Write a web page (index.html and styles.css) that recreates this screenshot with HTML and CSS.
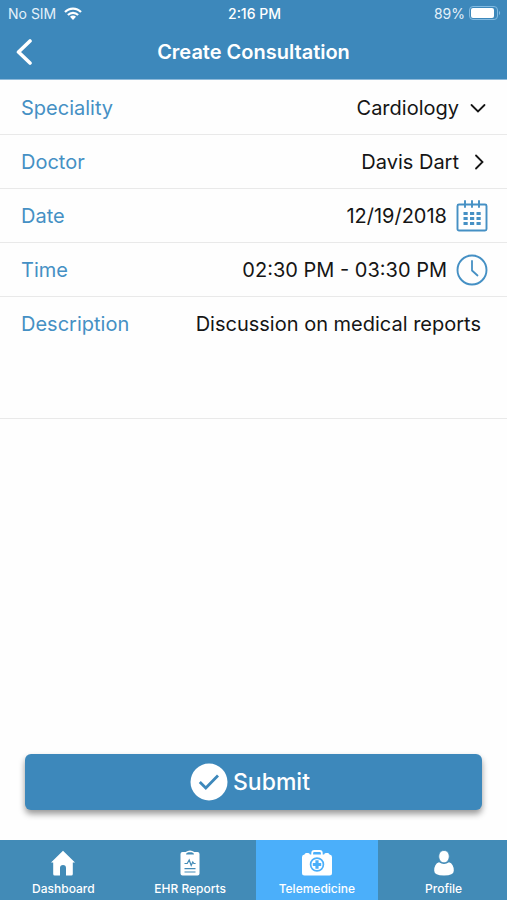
FILE: index.html
```html
<!DOCTYPE html>
<html lang="en">
<head>
  <meta charset="utf-8">
  <meta name="viewport" content="width=device-width, initial-scale=1">
  <title>Create Consultation</title>
  <link rel="stylesheet" href="styles.css">
</head>
<body>
  <header class="top">
    <div class="status">
      <div class="status-left">
        <span>No SIM</span>
        <svg class="wifi" viewBox="0 0 18 13" aria-hidden="true">
          <path d="M1 5a11 11 0 0 1 16 0M3.900 8a7 7 0 0 1 10.200 0" fill="none" stroke="currentColor" stroke-width="2.200"/>
          <path d="M9 13 6 9.800a4.200 4.200 0 0 1 6 0z" fill="currentColor"/>
        </svg>
      </div>
      <span class="clock">2:16 PM</span>
      <div class="status-right">
        <span>89%</span>
        <svg class="battery" viewBox="0 0 32 14" aria-hidden="true">
          <rect x="0.500" y="0.500" width="28" height="13" rx="3.500" fill="none" stroke="#82bbe2"/>
          <rect x="2" y="2" width="23" height="10" rx="2" fill="#fff"/>
          <path d="M30 5v4c1.500-.5 1.500-3.500 0-4z" fill="#82bbe2"/>
        </svg>
      </div>
    </div>
    <div class="title-bar">
      <button class="back" type="button" aria-label="Back">
        <svg viewBox="0 0 18 26" aria-hidden="true"><path d="M15 2 3.500 13 15 24" fill="none" stroke="currentColor" stroke-width="3.600" stroke-linecap="round" stroke-linejoin="round"/></svg>
      </button>
      <h1>Create Consultation</h1>
    </div>
  </header>

  <main>
    <form class="form">
      <div class="fields">
        <div class="row">
          <label for="speciality">Speciality</label>
          <select class="value" id="speciality"><option>Cardiology</option></select>
          <svg class="chevron" viewBox="0 0 18 18" aria-hidden="true"><path d="M2.500 6 9 12.500 15.500 6" fill="none" stroke="currentColor" stroke-width="1.800" stroke-linecap="round"/></svg>
        </div>
        <div class="row">
          <label for="doctor">Doctor</label>
          <button class="value" id="doctor" type="button">Davis Dart</button>
          <svg class="chevron" viewBox="0 0 18 18" aria-hidden="true"><path d="M7 2.500 13.500 9 7 15.500" fill="none" stroke="currentColor" stroke-width="1.800" stroke-linecap="round"/></svg>
        </div>
        <div class="row row-icon">
          <label for="date">Date</label>
          <input class="value" id="date" type="text" value="12/19/2018">
          <svg class="field-icon" viewBox="0 0 32 32" aria-hidden="true">
            <rect x="1.500" y="4.500" width="29" height="26" rx="1.500" fill="none" stroke="currentColor" stroke-width="1.900"/>
            <path d="M9 1v6M16 1v6M23 1v6" stroke="currentColor" stroke-width="1.900" stroke-linecap="round"/>
            <path d="M7.500 13.400h4.200m2.300 0h4.200m2.300 0h4.200M7.500 18.400h4.200m2.300 0h4.200m2.300 0h4.200M7.500 23.400h4.200m2.300 0h4.200m2.300 0h4.200" stroke="currentColor" stroke-width="3"/>
          </svg>
        </div>
        <div class="row row-icon">
          <label for="time">Time</label>
          <input class="value" id="time" type="text" value="02:30 PM - 03:30 PM">
          <svg class="field-icon" viewBox="0 0 32 32" aria-hidden="true">
            <circle cx="16" cy="16" r="14.500" fill="none" stroke="currentColor" stroke-width="1.900"/>
            <path d="M16 7v9.500l5.500 5" fill="none" stroke="currentColor" stroke-width="1.800" stroke-linecap="round" stroke-linejoin="round"/>
          </svg>
        </div>
        <div class="row row-tall">
          <label for="description">Description</label>
          <textarea class="value" id="description" rows="3">Discussion on medical reports</textarea>
        </div>
      </div>

      <button class="submit" type="submit">
        <svg viewBox="0 0 38 38" aria-hidden="true">
          <circle cx="19" cy="19" r="18.500" fill="#fff"/>
          <path d="m9.800 19 6 6L28 12.500" fill="none" stroke="#3d88bb" stroke-width="2.800"/>
        </svg>
        <span>Submit</span>
      </button>
    </form>
  </main>

  <nav class="tabs">
    <a class="tab" href="#dashboard">
      <svg viewBox="0 0 30 26" aria-hidden="true"><path d="M15 .8 3 12.500h2.200V24q0 1.500 1.500 1.500H12V18a3 3 0 0 1 6 0v7.500h5.300q1.500 0 1.500-1.500V12.500H27z" fill="currentColor"/></svg>
      <span>Dashboard</span>
    </a>
    <a class="tab" href="#reports">
      <svg viewBox="0 0 30 26" aria-hidden="true">
        <path d="M7.500 2h3.200Q12.500.5 15 .5T19.300 2h3.200Q24.500 2 24.500 4v19.500q0 2-2 2h-15q-2 0-2-2V4q0-2 2-2z" fill="currentColor"/>
        <path d="M11 4.500h8q0-2-2.500-2.300h-3Q11 2.500 11 4.500z" fill="#428bb7"/>
        <path d="M9.500 13.500h2.700l2-3.500 2 5.500 1.600-3.500 1 1.500h1.800M9.500 18.700h11M9.500 22h11" fill="none" stroke="#428bb7" stroke-width="1.200"/>
      </svg>
      <span>EHR Reports</span>
    </a>
    <a class="tab tab-active" href="#telemedicine" aria-current="page">
      <svg viewBox="0 0 30 26" aria-hidden="true">
        <path d="M10.200 5V3q0-2 2-2h5.600q2 0 2 2v2" fill="none" stroke="currentColor" stroke-width="1.800"/>
        <path d="M2.500 4.500q.3-1.500 1.700-1.500h2q1.500 0 1.700 1.500h14.200q.2-1.500 1.700-1.500h2q1.400 0 1.700 1.500Q30 4.800 30 7v16q0 2.500-2.500 2.500h-25Q0 25.500 0 23V7Q0 4.800 2.500 4.500z" fill="currentColor"/>
        <circle cx="15" cy="14.500" r="6.400" fill="none" stroke="#4baffa" stroke-width="1.700"/>
        <path d="M13.400 10.300h3.200v2.600h2.600v3.200h-2.600v2.600h-3.200v-2.600h-2.600v-3.200h2.600z" fill="#4baffa"/>
      </svg>
      <span>Telemedicine</span>
    </a>
    <a class="tab" href="#profile">
      <svg viewBox="0 0 30 26" aria-hidden="true">
        <path d="M10 12.200q5 3.500 10 0 4.800 1.500 4.800 8.500 0 4.800-9.800 4.800t-9.800-4.800q0-7 4.800-8.500z" fill="currentColor"/>
        <path d="M15 .5c3.300 0 5.200 2.300 5.200 6s-2.200 6.300-5.200 6.300-5.200-2.600-5.200-6.300S11.700.5 15 .5z" fill="currentColor" stroke="#428bb7" stroke-width="0.800"/>
      </svg>
      <span>Profile</span>
    </a>
  </nav>
</body>
</html>
```

FILE: styles.css
```css
* {
  box-sizing: border-box;
}

body {
  margin: 0;
  min-height: 100vh;
  display: flex;
  flex-direction: column;
  background: #fefefe;
  font-family: Inter, "Liberation Sans", sans-serif;
  color: #151515;
}

button,
input,
select,
textarea {
  font: inherit;
  color: inherit;
  background: none;
  border: 0;
  border-radius: 0;
  margin: 0;
  padding: 0;
  appearance: none;
}

svg {
  display: block;
  flex: none;
}

.top {
  background: #3d88bb;
  color: #fff;
  padding-bottom: 2px;
  border-bottom: 1px solid #8fbada;
}

.status {
  display: grid;
  grid-template-columns: 1fr auto 1fr;
  align-items: center;
  height: 26px;
  padding: 0 6px 0 8px;
  font-size: 14px;
}

.status-left,
.status-right {
  display: flex;
  align-items: center;
  gap: 8px;
  color: #e4f1fa;
}

.status-right {
  justify-content: flex-end;
  gap: 4px;
}

.clock {
  font-weight: 500;
}

.wifi {
  width: 18px;
  height: 13px;
  color: #fff;
}

.battery {
  width: 32px;
  height: 14px;
}

.title-bar {
  display: grid;
  grid-template-columns: 48px 1fr 48px;
  align-items: center;
  height: 51px;
}

.back {
  padding-left: 15px;
}

.back svg {
  width: 18px;
  height: 26px;
}

h1 {
  margin: 0;
  font-size: 20px;
  font-weight: 600;
  text-align: center;
}

main,
.form {
  flex: 1;
  display: flex;
  flex-direction: column;
}

.fields {
  padding-top: 1px;
  font-size: 20px;
  line-height: 24px;
}

.row {
  display: flex;
  align-items: center;
  min-height: 54px;
  padding: 0 20px 0 21px;
  border-bottom: 1px solid #e9e9e9;
}

.row label {
  color: #4590c4;
}

.value {
  flex: 1;
  min-width: 0;
  text-align: right;
  text-align-last: right;
  outline: none;
}

.chevron {
  width: 18px;
  height: 18px;
  margin-left: 10px;
}

.row-icon .field-icon {
  width: 32px;
  height: 32px;
  margin-left: 9px;
  color: #4590c4;
}

.row-icon {
  padding-right: 19px;
}

.row-tall {
  align-items: flex-start;
  min-height: 122px;
  padding-top: 15px;
  padding-right: 26px;
}

.row-tall .value {
  resize: none;
  overflow: hidden;
}

.submit {
  display: flex;
  align-items: center;
  justify-content: center;
  gap: 5px;
  height: 56px;
  margin: auto 25px 30px;
  padding-right: 7px;
  border-radius: 6px;
  background: #3d88bb;
  color: #fff;
  font-size: 23px;
  font-weight: 500;
  box-shadow: 0 4px 6px rgba(0, 0, 0, 0.4);
}

.submit svg {
  width: 38px;
  height: 38px;
}

.tabs {
  display: grid;
  grid-template-columns: repeat(4, 1fr);
  height: 60px;
  background: #428bb7;
}

.tab {
  display: flex;
  flex-direction: column;
  align-items: center;
  gap: 4px;
  margin: 0 2px;
  padding-top: 10px;
  color: #fff;
  font-size: 12px;
  font-weight: 500;
  line-height: 18px;
  text-decoration: none;
}

.tab svg {
  width: 30px;
  height: 26px;
}

.tab-active {
  background: #4baffa;
}
```
